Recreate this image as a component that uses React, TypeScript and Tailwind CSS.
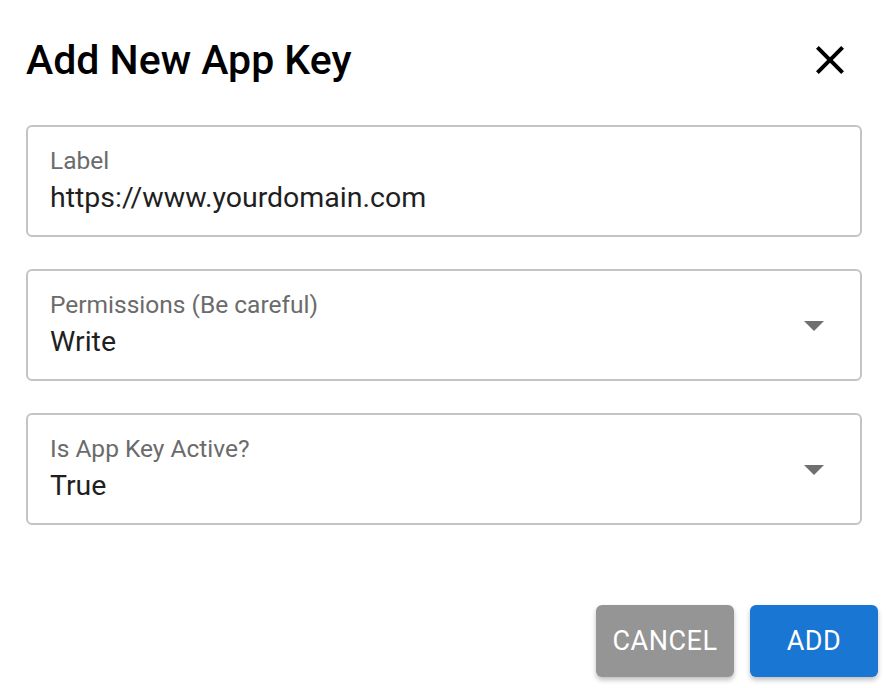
function Field({ label, value, select }: { label: string; value: string; select?: boolean }) {
  return (
    <div className="flex h-[112px] items-center rounded-[6px] border-2 border-[#c4c4c4] bg-white pl-[22px] pr-[22px]">
      <div className="flex-1">
        <div className="text-[24.5px] leading-[26px] text-[#6b6b6b]">{label}</div>
        <div className="mt-[8px] text-[28.5px] leading-[32px] text-[#1f1f1f]">{value}</div>
      </div>
      {select && (
        <svg viewBox="0 0 24 24" className="h-[48px] w-[48px] fill-[#6f6f6f]">
          <path d="M7 10l5 5 5-5z" />
        </svg>
      )}
    </div>
  )
}

export default function App() {
  return (
    <div className="min-h-screen bg-white font-['Roboto',sans-serif]">
      <div className="flex items-center justify-between pl-[26px] pr-[34px] pt-[35px]">
        <h1 className="text-[41px] font-medium leading-[50px] text-black">Add New App Key</h1>
        <svg viewBox="0 0 24 24" className="h-[48px] w-[48px] fill-black">
          <path d="M19 6.41L17.59 5 12 10.59 6.41 5 5 6.41 10.59 12 5 17.59 6.41 19 12 13.41 17.59 19 19 17.59 13.41 12z" />
        </svg>
      </div>

      <div className="mt-[40px] flex flex-col gap-[32px] px-[26px]">
        <Field label="Label" value="https://www.yourdomain.com" />
        <Field label="Permissions (Be careful)" value="Write" select />
        <Field label="Is App Key Active?" value="True" select />
      </div>

      <div className="mt-[80px] flex justify-end gap-[16px] pr-[10px]">
        <button className="h-[72px] w-[138px] rounded-[6px] bg-[#959595] text-[27px] tracking-[0.5px] text-white shadow-[0_3px_5px_rgba(0,0,0,0.25)]">
          CANCEL
        </button>
        <button className="h-[72px] w-[128px] rounded-[6px] bg-[#1976d2] text-[27px] tracking-[0.5px] text-white shadow-[0_3px_5px_rgba(0,0,0,0.25)]">
          ADD
        </button>
      </div>
    </div>
  )
}
